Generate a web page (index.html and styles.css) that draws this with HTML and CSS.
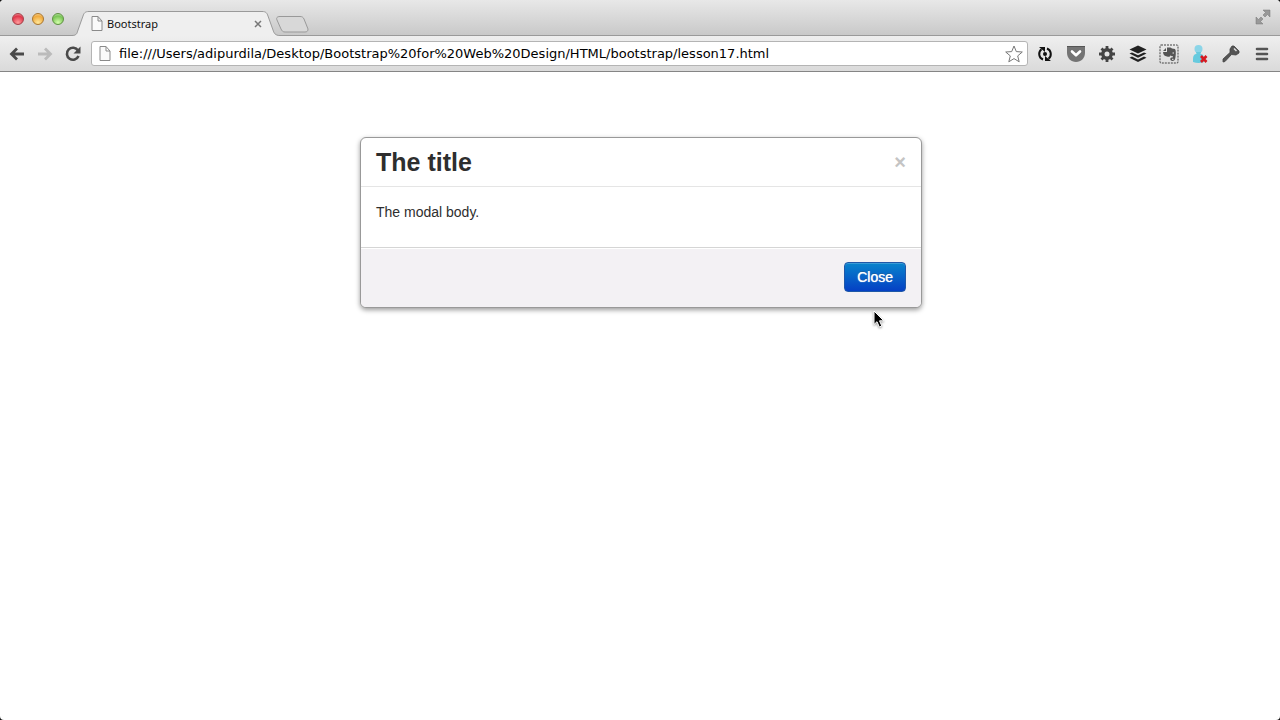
FILE: index.html
```html
<!DOCTYPE html>
<html lang="en">
<head>
  <meta charset="UTF-8">
  <meta name="viewport" content="width=device-width, initial-scale=1.0">
  <title>Bootstrap</title>
  <link rel="stylesheet" href="styles.css">
</head>
<body>
  <div class="browser">
    <header class="tab-bar">
      <div class="lights">
        <button class="light red" aria-label="Close window"></button>
        <button class="light yellow" aria-label="Minimize"></button>
        <button class="light green" aria-label="Zoom"></button>
      </div>
      <div class="tab">
        <svg class="tab-shape" width="208" height="25" viewBox="0 0 208 25">
          <path d="M0 24.500C5 24.500 5 22 6 19L11 5C12 2 13 .5 17 .5H190C194 .5 195 2 196 5L201 19C202 22 203 24.500 208 24.500V25H0z" fill="#efefef"/>
          <path d="M0 24.500C5 24.500 5 22 6 19L11 5C12 2 13 .5 17 .5H190C194 .5 195 2 196 5L201 19C202 22 203 24.500 208 24.500" fill="none" stroke="#9a9a9a"/>
        </svg>
        <svg class="page-icon" width="12" height="15" viewBox="0 0 12 15"><path d="M1 .5H7L11 5V14.500H1zM7 .5V5H11" fill="#fafafa" stroke="#8a8a8a"/></svg>
        <span class="tab-title">Bootstrap</span>
        <button class="tab-close" aria-label="Close tab">
          <svg width="8" height="8" viewBox="0 0 8 8"><path d="M1 1L7 7M7 1L1 7" stroke="#777" stroke-width="1.500"/></svg>
        </button>
      </div>
      <button class="new-tab" aria-label="New tab">
        <svg width="33" height="17" viewBox="0 0 33 17"><path d="M4 .5H24C26 .5 27 1 28 3L32 13C32 15 31 16 29 16H9C7 16 6 15 5 13L1 4C0 2 1 .5 4 .5z" fill="#d8d8d8" stroke="#999"/></svg>
      </button>
      <button class="fullscreen" aria-label="Full screen">
        <svg width="16" height="16" viewBox="0 0 16 16"><path d="M8 1H15V8L12.500 5.500L10 8L8 6L10.500 3.500zM1 8L3.500 10.500L6 8L8 10L5.500 12.500L8 15H1z" fill="#999" stroke="#777" stroke-width=".5"/></svg>
      </button>
    </header>

    <nav class="toolbar">
      <button aria-label="Back"><svg width="16" height="14" viewBox="0 0 16 14"><path d="M15 7H3M8 1.500L2.500 7L8 12.500" fill="none" stroke="#4a4a4a" stroke-width="2.800"/></svg></button>
      <button aria-label="Forward"><svg width="16" height="14" viewBox="0 0 16 14"><path d="M1 7H13M8 1.500L13.500 7L8 12.500" fill="none" stroke="#bbb" stroke-width="2.800"/></svg></button>
      <button aria-label="Reload"><svg width="16" height="16" viewBox="0 0 16 16"><path d="M13 4.500A6 6 0 1 0 13.500 10" fill="none" stroke="#4a4a4a" stroke-width="2.600"/><path d="M15.500 .5V7.500H8.500z" fill="#4a4a4a"/></svg></button>
      <div class="address">
        <svg class="page-icon" width="12" height="15" viewBox="0 0 12 15"><path d="M1 .5H7L11 5V14.500H1zM7 .5V5H11" fill="#fafafa" stroke="#8a8a8a"/></svg>
        <input type="text" aria-label="Address" value="file:///Users/adipurdila/Desktop/Bootstrap%20for%20Web%20Design/HTML/bootstrap/lesson17.html">
        <button aria-label="Bookmark"><svg width="18" height="18" viewBox="0 0 18 18"><path d="M9 1L11.300 6.600L17.300 7L12.700 10.900L14.200 16.800L9 13.600L3.800 16.800L5.300 10.900L.7 7L6.700 6.600z" fill="#fff" stroke="#777"/></svg></button>
      </div>
      <div class="extensions">
        <button aria-label="Sync"><svg width="16" height="16" viewBox="0 0 16 16"><path d="M6 13.500A6 6 0 0 1 4.500 3.200M10 2.500A6 6 0 0 1 11.500 12.800" fill="none" stroke="#111" stroke-width="2"/><path d="M2 1H8V6zM14 15H8V10z" fill="#111"/><circle cx="8" cy="8" r="2" fill="#111"/></svg></button>
        <button aria-label="Pocket"><svg width="20" height="18" viewBox="0 0 20 18"><path d="M1 1H19V8C19 13 15 17 10 17S1 13 1 8z" fill="#747474"/><path d="M1 1.500H19" stroke="#555"/><path d="M6 6.500L10 10.300L14 6.500" fill="none" stroke="#fff" stroke-width="2.600" stroke-linecap="round" stroke-linejoin="round"/></svg></button>
        <button aria-label="Settings"><svg width="18" height="18" viewBox="0 0 18 18"><circle cx="9" cy="9" r="4.200" fill="none" stroke="#444" stroke-width="3.400"/><path d="M9 1V4M9 14V17M1 9H4M14 9H17M3.500 3.500L5.500 5.500M12.500 12.500L14.500 14.500M3.500 14.500L5.500 12.500M12.500 5.500L14.500 3.500" stroke="#444" stroke-width="2.800"/></svg></button>
        <button aria-label="Buffer"><svg width="18" height="18" viewBox="0 0 18 18"><path d="M9 .5L17.500 4.500L9 8.500L.5 4.500z" fill="#222"/><path d="M.5 8.500L3 7.400L9 10.300L15 7.400L17.500 8.500L9 12.700zM.5 12.800L3 11.600L9 14.500L15 11.600L17.500 12.800L9 17z" fill="#222"/></svg></button>
        <button aria-label="Evernote"><svg width="20" height="20" viewBox="0 0 20 20"><rect x="1" y="1" width="18" height="18" rx="1" fill="none" stroke="#444" stroke-dasharray="2 1"/><path d="M4 7L7 4V7zM8 3.500H11.500L13 4.500L16 5C17 6 17 9.500 16.500 13C16.200 16 15 17 13.500 17C11 17 10.500 14 12.500 13.500L14 13.300V12.300C12.500 12.300 12 11.500 11.500 11.500C11 13 9.500 13 8 12.500C5.500 12 4.300 11 4 8H8z" fill="#555"/><path d="M13.500 9H15M13 15.300H14.500" stroke="#eee" fill="none"/></svg></button>
        <button aria-label="Remove user"><svg width="16" height="20" viewBox="0 0 16 20"><circle cx="6.500" cy="5" r="4" fill="#8bd5e8"/><path d="M4 8H9L8.500 10C11 10 12 12 12 15V18Q6.500 20 1 18V15C1 12 2 10 4.500 10z" fill="#67cade"/><path d="M9 12L14.500 18M14.500 12L9 18" stroke="#d71920" stroke-width="2.600"/></svg></button>
        <button aria-label="Key"><svg width="18" height="18" viewBox="0 0 18 18"><path d="M12 1L17 6V8L14 10L9.500 9.500L3 16.500L1 17V14L8 7.500L8 4L10 1z" fill="#555" stroke="#444" stroke-width=".8"/><path d="M12 3.500L14.500 6" stroke="#ddd" stroke-width="1.500"/></svg></button>
        <button aria-label="Menu"><svg width="14" height="14" viewBox="0 0 14 14"><path d="M2 2H12M2 7H12M2 12H12" stroke="#555" stroke-width="2.600" stroke-linecap="round"/></svg></button>
      </div>
    </nav>

    <main class="page">
      <div class="modal" role="dialog" aria-labelledby="modal-title">
        <div class="modal-header">
          <h3 id="modal-title">The title</h3>
          <button class="close" aria-label="Dismiss">×</button>
        </div>
        <div class="modal-body">
          <p>The modal body.</p>
        </div>
        <div class="modal-footer">
          <button class="btn btn-primary">Close</button>
        </div>
        <svg class="cursor" width="12" height="19" viewBox="0 0 12 19"><path d="M1 1V14.500L4 11.700L6.300 17L8.800 16L6.500 10.800H10.800z" fill="#000" stroke="#fff"/></svg>
      </div>
    </main>
  </div>
</body>
</html>
```

FILE: styles.css
```css
* {
  box-sizing: border-box;
}
body {
  margin: 0;
  background: #111;
  font-family: "Liberation Sans", Arial, sans-serif;
  font-size: 14px;
  line-height: 20px;
  color: #2e2e2e;
}
button {
  padding: 0;
  border: 0;
  background: none;
  font-family: inherit;
}
svg {
  display: block;
  flex: none;
}

/* browser window */
.browser {
  min-height: 100vh;
  display: flex;
  flex-direction: column;
  background: #fff;
  border-radius: 4px;
  overflow: hidden;
}
.tab-bar {
  display: flex;
  height: 36px;
  background: linear-gradient(#e8e8e8, #c8c8c8);
  box-shadow: inset 0 -1px #9a9a9a;
}
.lights {
  display: flex;
  gap: 8px;
  padding: 13px 8px 0 12px;
}
.light {
  width: 12px;
  height: 12px;
  border: 1px solid #777;
  border-radius: 50%;
}
.red {
  border-color: #a34048;
  background: radial-gradient(circle at 50% 85%, #ff9c9c, #e0354a 65%, #f3b0b0);
}
.yellow {
  border-color: #a9762f;
  background: radial-gradient(circle at 50% 85%, #ffe79a, #f0a93c 65%, #fae0b0);
}
.green {
  border-color: #5f9142;
  background: radial-gradient(circle at 50% 85%, #d4ffab, #78c455 65%, #d0efc0);
}
.tab {
  position: relative;
  display: flex;
  align-items: center;
  gap: 4px;
  width: 208px;
  height: 25px;
  margin-top: 11px;
  padding: 0 18px 0 19px;
}
.tab-shape {
  position: absolute;
  top: 0;
  left: 0;
}
.tab .page-icon,
.tab-title,
.tab-close {
  position: relative;
}
.tab-title {
  flex: 1;
  font-family: "Noto Sans", sans-serif;
  font-size: 11px;
  color: #111;
}
.new-tab {
  align-self: flex-start;
  margin-top: 16px;
  margin-left: -4px;
}
.fullscreen {
  align-self: flex-start;
  margin: 9px 9px 0 auto;
}
.toolbar {
  display: flex;
  align-items: center;
  gap: 12px;
  height: 36px;
  padding: 0 8px 0 9px;
  background: linear-gradient(#efefef, #dadada);
  border-bottom: 1px solid #858585;
}
.address {
  flex: 1;
  display: flex;
  align-items: center;
  gap: 8px;
  height: 25px;
  margin-left: -2px;
  padding: 0 4px 0 7px;
  background: #fff;
  border: 1px solid #b4b4b4;
  border-radius: 3px;
}
.address input {
  flex: 1;
  min-width: 0;
  height: 21px;
  padding: 0;
  border: 0;
  outline: 0;
  background: none;
  font-family: "DejaVu Sans", sans-serif;
  font-size: 13px;
  color: #000;
}
.extensions {
  display: flex;
  align-items: center;
  gap: 11px;
  margin-left: -5px;
}
.extensions button {
  display: flex;
  justify-content: center;
  width: 20px;
}

/* modal */
.page {
  flex: 1;
  padding: 65px 0;
}
.modal {
  position: relative;
  width: 562px;
  max-width: 100%;
  margin-left: max(0px, calc(50% - 280px));
  background: #fff;
  border: 1px solid #999;
  border-radius: 6px;
  box-shadow: 0 2px 5px rgba(0, 0, 0, 0.4);
}
.modal-header {
  display: flex;
  align-items: center;
  justify-content: space-between;
  padding: 9px 15px;
  border-bottom: 1px solid #e5e5e5;
}
.modal-header h3 {
  margin: 0;
  font-size: 25px;
  line-height: 30px;
}
.close {
  font-size: 20px;
  font-weight: bold;
  line-height: 20px;
  color: #c4c4c4;
}
.modal-body {
  padding: 15px;
}
.modal-body p {
  margin: 0 0 10px;
}
.modal-footer {
  display: flex;
  justify-content: flex-end;
  padding: 14px 15px 15px;
  background: #f3f1f4;
  border-top: 1px solid #d5d5d5;
  border-radius: 0 0 5px 5px;
  box-shadow: inset 0 1px #fff;
}
.btn {
  height: 30px;
  padding: 0 12px;
  border: 1px solid #1f58a8;
  border-radius: 4px;
  font-size: 14px;
  line-height: 20px;
}
.btn-primary {
  color: #fff;
  background: linear-gradient(#0884cc, #0540c4);
  box-shadow: inset 0 1px rgba(255, 255, 255, 0.2);
  text-shadow: 0 0 1px #fff, 0 -1px rgba(0, 0, 0, 0.25);
}
.cursor {
  position: absolute;
  top: 172px;
  left: 512px;
  filter: drop-shadow(0 1px 1px rgba(0, 0, 0, 0.4));
}
```
